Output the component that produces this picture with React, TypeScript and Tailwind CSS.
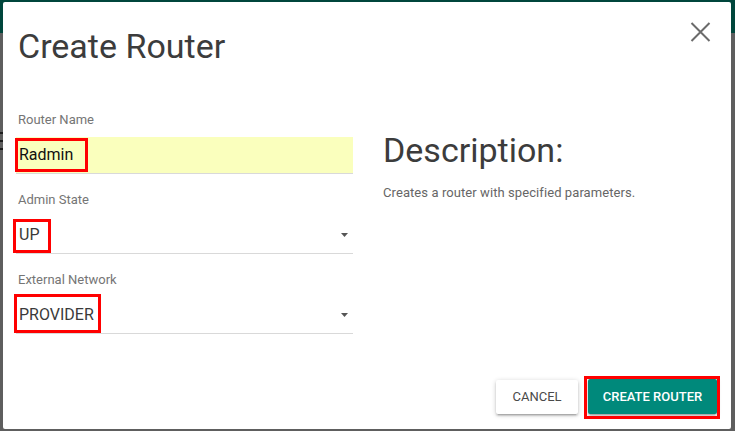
import React from "react";

function Caret() {
  return (
    <svg width="7" height="4" viewBox="0 0 7 4" className="block">
      <path d="M0 0 L7 0 L3.5 4 Z" fill="#555" />
    </svg>
  );
}

function RedBox({ cls }: { cls: string }) {
  return <div className={"absolute border-[3px] border-[#ff0000] pointer-events-none " + cls} />;
}

export default function App() {
  return (
    <div className="relative w-[735px] h-[431px] bg-[#5e5e5e] overflow-hidden" style={{ fontFamily: "Roboto, 'Liberation Sans', sans-serif" }}>
      <div className="absolute left-0 top-0 w-full h-[33px] bg-[#00463c]" />
      <div className="absolute left-0 top-[132px] w-[3px] h-[2px] bg-[#1e1e1e]" />
      <div className="absolute left-0 top-[140px] w-[3px] h-[2px] bg-[#1e1e1e]" />
      <div className="absolute left-0 top-[148px] w-[3px] h-[2px] bg-[#1e1e1e]" />

      <div className="absolute left-[3px] top-[2px] w-[728px] h-[427px] bg-white rounded-[2px] flex flex-col pl-[13px] pr-[14px] pb-[15px]">
        <div className="flex items-start justify-between">
          <h1 className="mt-[24px] pl-[2px] text-[34px] leading-[40px] text-[#3c3c3c] font-normal">Create Router</h1>
          <button className="mt-[20px] mr-[6px] p-0">
            <svg width="21" height="20" viewBox="0 0 21 20">
              <path d="M1.5 1 L19.5 19 M19.5 1 L1.5 19" stroke="#6b6b6b" strokeWidth="2" />
            </svg>
          </button>
        </div>

        <div className="flex mt-[46px] gap-[30px]">
          <div className="w-[337px] flex flex-col">
            <label className="text-[13px] leading-[16px] text-[#757575] pl-[2px] mb-[9px]">Router Name</label>
            <div className="h-[37px] bg-[#faffbd] border-b border-[#d9d9d9] flex items-center pl-[3px] text-[16px] text-[#111]">Radmin</div>

            <label className="mt-[18px] text-[13px] leading-[16px] text-[#757575] pl-[2px] mb-[9px]">Admin State</label>
            <div className="h-[37px] border-b border-[#d9d9d9] flex items-center justify-between pl-[3px] pr-[5px] text-[16px] text-[#3a3a3a]">
              <span>UP</span>
              <Caret />
            </div>

            <label className="mt-[18px] text-[13px] leading-[16px] text-[#757575] pl-[2px] mb-[9px]">External Network</label>
            <div className="h-[37px] border-b border-[#d9d9d9] flex items-center justify-between pl-[3px] pr-[5px] text-[16px] text-[#3a3a3a]">
              <span>PROVIDER</span>
              <Caret />
            </div>
          </div>

          <div className="flex flex-col pt-[18px]">
            <h2 className="text-[34px] leading-[40px] text-[#3c3c3c] font-normal">Description:</h2>
            <p className="mt-[15px] text-[13px] leading-[16px] text-[#666] tracking-[0.08px]">Creates a router with specified parameters.</p>
          </div>
        </div>

        <div className="mt-auto flex justify-end gap-[10px] items-end">
          <button className="h-[34px] w-[82px] bg-white rounded-[2px] text-[13px] font-normal text-[#4a4a4a] shadow-[0_2px_2px_0_rgba(0,0,0,0.14),0_3px_1px_-2px_rgba(0,0,0,0.12),0_1px_5px_0_rgba(0,0,0,0.2)]">CANCEL</button>
          <button className="h-[35px] w-[129px] bg-[#00897b] rounded-[2px] text-[13px] font-medium text-white shadow-[0_2px_2px_0_rgba(0,0,0,0.14),0_3px_1px_-2px_rgba(0,0,0,0.12),0_1px_5px_0_rgba(0,0,0,0.2)]">CREATE ROUTER</button>
        </div>

        <RedBox cls="left-[12px] top-[136px] w-[73px] h-[34px]" />
        <RedBox cls="left-[10px] top-[217px] w-[38px] h-[34px]" />
        <RedBox cls="left-[11px] top-[292px] w-[87px] h-[39px]" />
        <RedBox cls="left-[581px] top-[374px] w-[136px] h-[43px]" />
      </div>
    </div>
  );
}
